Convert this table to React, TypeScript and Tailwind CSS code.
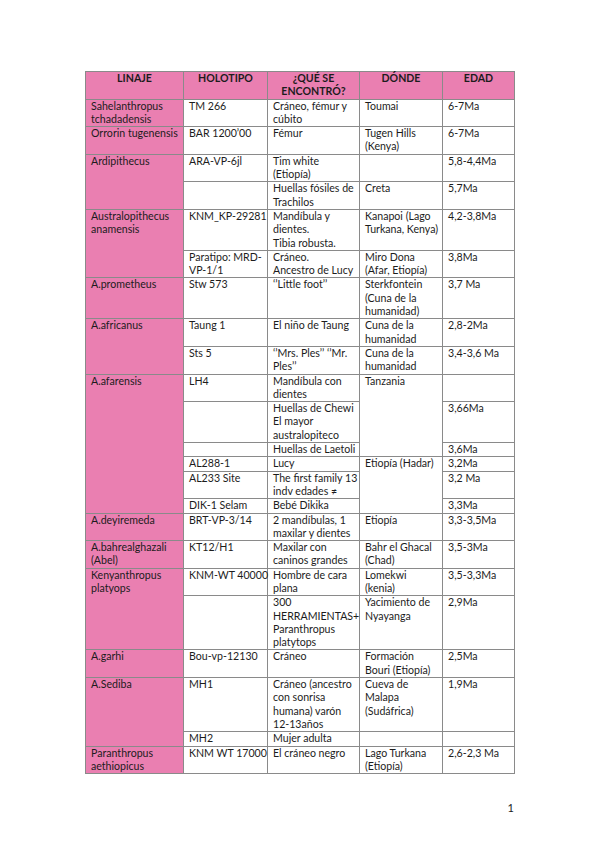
import React from 'react';

type Row = {
  linaje?: string[];
  linajeSpan?: number;
  holotipo: string[];
  que: string[];
  donde?: string[];
  dondeSpan?: number;
  edad: string[];
};

const rows: Row[] = [
  { linaje: ['Sahelanthropus', 'tchadadensis'], holotipo: ['TM 266'], que: ['Cráneo, fémur y', 'cúbito'], donde: ['Toumai'], edad: ['6-7Ma'] },
  { linaje: ['Orrorin tugenensis'], holotipo: ['BAR 1200’00'], que: ['Fémur'], donde: ['Tugen Hills', '(Kenya)'], edad: ['6-7Ma'] },
  { linaje: ['Ardipithecus'], linajeSpan: 2, holotipo: ['ARA-VP-6jl'], que: ['Tim white', '(Etiopía)'], donde: [], edad: ['5,8-4,4Ma'] },
  { holotipo: [], que: ['Huellas fósiles de', 'Trachilos'], donde: ['Creta'], edad: ['5,7Ma'] },
  { linaje: ['Australopithecus', 'anamensis'], linajeSpan: 2, holotipo: ['KNM_KP-29281'], que: ['Mandíbula y', 'dientes.', 'Tibia robusta.'], donde: ['Kanapoi (Lago', 'Turkana, Kenya)'], edad: ['4,2-3,8Ma'] },
  { holotipo: ['Paratipo: MRD-', 'VP-1/1'], que: ['Cráneo.', 'Ancestro de Lucy'], donde: ['Miro Dona', '(Afar, Etiopía)'], edad: ['3,8Ma'] },
  { linaje: ['A.prometheus'], holotipo: ['Stw 573'], que: ['‘’Little foot’’'], donde: ['Sterkfontein', '(Cuna de la', 'humanidad)'], edad: ['3,7 Ma'] },
  { linaje: ['A.africanus'], linajeSpan: 2, holotipo: ['Taung 1'], que: ['El niño de Taung'], donde: ['Cuna de la', 'humanidad'], edad: ['2,8-2Ma'] },
  { holotipo: ['Sts 5'], que: ['‘’Mrs. Ples’’ ‘’Mr.', 'Ples’’'], donde: ['Cuna de la', 'humanidad'], edad: ['3,4-3,6 Ma'] },
  { linaje: ['A.afarensis'], linajeSpan: 6, holotipo: ['LH4'], que: ['Mandíbula con', 'dientes'], donde: ['Tanzania'], dondeSpan: 3, edad: [] },
  { holotipo: [], que: ['Huellas de Chewi', 'El mayor', 'australopiteco'], edad: ['3,66Ma'] },
  { holotipo: [], que: ['Huellas de Laetoli'], edad: ['3,6Ma'] },
  { holotipo: ['AL288-1'], que: ['Lucy'], donde: ['Etiopía (Hadar)'], dondeSpan: 3, edad: ['3,2Ma'] },
  { holotipo: ['AL233 Site'], que: ['The first family 13', 'indv edades ≠'], edad: ['3,2 Ma'] },
  { holotipo: ['DIK-1 Selam'], que: ['Bebé Dikika'], edad: ['3,3Ma'] },
  { linaje: ['A.deyiremeda'], holotipo: ['BRT-VP-3/14'], que: ['2 mandíbulas, 1', 'maxilar y dientes'], donde: ['Etiopía'], edad: ['3,3-3,5Ma'] },
  { linaje: ['A.bahrealghazali', '(Abel)'], holotipo: ['KT12/H1'], que: ['Maxilar con', 'caninos grandes'], donde: ['Bahr el Ghacal', '(Chad)'], edad: ['3,5-3Ma'] },
  { linaje: ['Kenyanthropus', 'platyops'], linajeSpan: 2, holotipo: ['KNM-WT 40000'], que: ['Hombre de cara', 'plana'], donde: ['Lomekwi', '(kenia)'], edad: ['3,5-3,3Ma'] },
  { holotipo: [], que: ['300', 'HERRAMIENTAS+', 'Paranthropus', 'platytops'], donde: ['Yacimiento de', 'Nyayanga'], edad: ['2,9Ma'] },
  { linaje: ['A.garhi'], holotipo: ['Bou-vp-12130'], que: ['Cráneo'], donde: ['Formación', 'Bouri (Etiopía)'], edad: ['2,5Ma'] },
  { linaje: ['A.Sediba'], linajeSpan: 2, holotipo: ['MH1'], que: ['Cráneo (ancestro', 'con sonrisa', 'humana) varón', '12-13años'], donde: ['Cueva de', 'Malapa', '(Sudáfrica)'], edad: ['1,9Ma'] },
  { holotipo: ['MH2'], que: ['Mujer adulta'], donde: [], edad: [] },
  { linaje: ['Paranthropus', 'aethiopicus'], holotipo: ['KNM WT 17000'], que: ['El cráneo negro'], donde: ['Lago Turkana', '(Etiopía)'], edad: ['2,6-2,3 Ma'] },
];

const cell = 'border border-[#8a8a8a] align-top px-[5px] py-0 whitespace-nowrap text-left font-normal';
const pink = 'bg-[#ea7fb1]';

function Lines({ lines }: { lines: string[] }) {
  return (
    <>
      {lines.map((l, i) => (
        <React.Fragment key={i}>
          {i > 0 && <br />}
          {l}
        </React.Fragment>
      ))}
    </>
  );
}

export default function App() {
  return (
    <div
      className="w-[599px] h-[848px] bg-white text-[#1c1c1c] pt-[71px] pl-[85px] pr-[85px]"
      style={{ fontFamily: 'Lato, "Liberation Sans", sans-serif' }}
    >
      <table className="table-fixed border-collapse w-[429px] text-[10.6px] leading-[13.3px]">
        <colgroup>
          <col className="w-[98px]" />
          <col className="w-[84px]" />
          <col className="w-[92px]" />
          <col className="w-[83px]" />
          <col className="w-[72px]" />
        </colgroup>
        <thead>
          <tr className={`${pink} font-bold`}>
            <th className="border border-[#8a8a8a] align-top text-center px-1">LINAJE</th>
            <th className="border border-[#8a8a8a] align-top text-center px-1">HOLOTIPO</th>
            <th className="border border-[#8a8a8a] align-top text-center px-1">
              ¿QUÉ SE
              <br />
              ENCONTRÓ?
            </th>
            <th className="border border-[#8a8a8a] align-top text-center px-1">DÓNDE</th>
            <th className="border border-[#8a8a8a] align-top text-center px-1">EDAD</th>
          </tr>
        </thead>
        <tbody>
          {rows.map((r, i) => (
            <tr key={i}>
              {r.linaje && (
                <td rowSpan={r.linajeSpan ?? 1} className={`${cell} ${pink}`}>
                  <Lines lines={r.linaje} />
                </td>
              )}
              <td className={cell}>
                <Lines lines={r.holotipo} />
              </td>
              <td className={cell}>
                <Lines lines={r.que} />
              </td>
              {r.donde && (
                <td rowSpan={r.dondeSpan ?? 1} className={cell}>
                  <Lines lines={r.donde} />
                </td>
              )}
              <td className={cell}>
                <Lines lines={r.edad} />
              </td>
            </tr>
          ))}
        </tbody>
      </table>
      <div className="mt-[27px] text-right text-[11px] leading-[14px]">1</div>
    </div>
  );
}
